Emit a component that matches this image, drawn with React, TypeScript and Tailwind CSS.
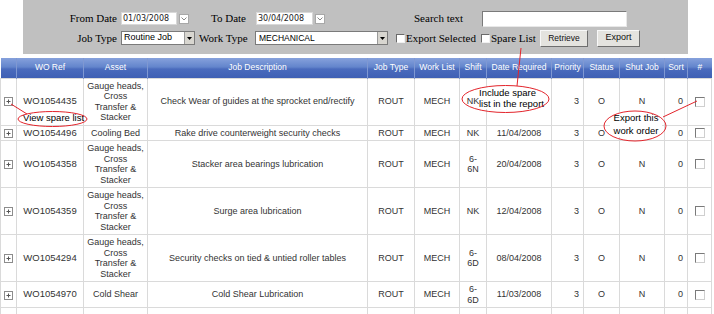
import React from "react";

type Row = {
  wo: string;
  asset: string[];
  desc: string;
  shift: string[];
  date: string;
  shut: string;
};

const rows: Row[] = [
  { wo: "WO1054435", asset: ["Gauge heads,", "Cross", "Transfer &", "Stacker"], desc: "Check Wear of guides at the sprocket end/rectify", shift: ["NK"], date: "", shut: "N" },
  { wo: "WO1054496", asset: ["Cooling Bed"], desc: "Rake drive counterweight security checks", shift: ["NK"], date: "11/04/2008", shut: "" },
  { wo: "WO1054358", asset: ["Gauge heads,", "Cross", "Transfer &", "Stacker"], desc: "Stacker area bearings lubrication", shift: ["6-", "6N"], date: "20/04/2008", shut: "N" },
  { wo: "WO1054359", asset: ["Gauge heads,", "Cross", "Transfer &", "Stacker"], desc: "Surge area lubrication", shift: ["NK"], date: "12/04/2008", shut: "N" },
  { wo: "WO1054294", asset: ["Gauge heads,", "Cross", "Transfer &", "Stacker"], desc: "Security checks on tied & untied roller tables", shift: ["6-", "6D"], date: "08/04/2008", shut: "N" },
  { wo: "WO1054970", asset: ["Cold Shear"], desc: "Cold Shear Lubrication", shift: ["6-", "6D"], date: "11/03/2008", shut: "N" },
];

const headers = ["", "WO Ref", "Asset", "Job Description", "Job Type", "Work List", "Shift", "Date Required", "Priority", "Status", "Shut Job", "Sort", "#"];
const widths = [16, 67, 64, 220, 47, 45, 27, 65, 32, 36, 45, 23, 24];

function PlusIcon() {
  return (
    <svg width="9" height="9" viewBox="0 0 9 9" className="inline-block align-middle">
      <rect x="0.5" y="0.5" width="8" height="8" fill="#fff" stroke="#8c8c8c" />
      <path d="M2.5 4.5H6.5M4.5 2.5V6.5" stroke="#555" strokeWidth="1" />
    </svg>
  );
}

function RowCheck() {
  return (
    <span className="inline-block align-middle w-[10px] h-[10px] bg-white border-t border-l border-t-[#7a7a7a] border-l-[#7a7a7a] border-b border-r border-b-[#cfcfcf] border-r-[#cfcfcf]" />
  );
}

function PanelCheck() {
  return (
    <span className="inline-block w-[9px] h-[9px] bg-white border-t border-l border-t-[#6a6a6a] border-l-[#6a6a6a] border-b border-r border-b-[#f0f0f0] border-r-[#f0f0f0]" />
  );
}

function DateBtn() {
  return (
    <span className="flex items-center justify-center w-[10px] h-[10px] bg-white border border-[#a8a8a8]">
      <svg width="6" height="4" viewBox="0 0 6 4">
        <path d="M0.5 0.5L3 3L5.5 0.5" stroke="#888" fill="none" strokeWidth="1" />
      </svg>
    </span>
  );
}

function SelectArrow() {
  return (
    <span className="flex items-center justify-center w-[10px] h-full bg-[#d8d6d0] border-l border-[#9a9a9a]">
      <svg width="5" height="3" viewBox="0 0 5 3">
        <path d="M0 0H5L2.5 3Z" fill="#000" />
      </svg>
    </span>
  );
}

const cell = "border border-[#dadada] py-[2px]";

export default function App() {
  const serif = { fontFamily: '"Liberation Serif", "Times New Roman", serif' };
  const sans = { fontFamily: '"Liberation Sans", Arial, sans-serif' };
  const verd = { fontFamily: '"DejaVu Sans", Verdana, sans-serif' };
  return (
    <div className="relative w-[714px] h-[314px] overflow-hidden bg-white" style={sans}>
      {/* filter panel */}
      <div className="ml-[23px] w-[665px] h-[54px] bg-[#c0c0c0] pt-[10px] text-[11px] text-black" style={serif}>
        <div className="flex items-center h-[17px]">
          <div className="w-[94px] text-right">From Date</div>
          <div className="ml-[4px] w-[56px] h-[13px] bg-white border border-[#d8d8d8] flex items-center pl-[1px] text-[8px] text-[#222]" style={verd}>01/03/2008</div>
          <div className="ml-[2px]"><DateBtn /></div>
          <div className="ml-[22px] w-[45px]">To Date</div>
          <div className="w-[57px] h-[13px] bg-white border border-[#d8d8d8] flex items-center pl-[1px] text-[8px] text-[#222]" style={verd}>30/04/2008</div>
          <div className="ml-[2px]"><DateBtn /></div>
          <div className="ml-[89px] w-[68px]">Search text</div>
          <div className="w-[145px] h-[16px] bg-white border-t border-l border-t-[#7a7a7a] border-l-[#7a7a7a] border-b border-r border-b-[#e8e8e8] border-r-[#e8e8e8]" />
        </div>
        <div className="flex items-center h-[18px] mt-[2px]">
          <div className="w-[94px] text-right">Job Type</div>
          <div className="ml-[4px] w-[74px] h-[14px] bg-white border border-[#7a7a7a] flex items-stretch">
            <span className="flex-1 flex items-center pl-[2px] text-[9px] text-black" style={sans}>Routine Job</span>
            <SelectArrow />
          </div>
          <div className="ml-[4px] w-[56px]">Work Type</div>
          <div className="w-[133px] h-[14px] bg-white border border-[#7a7a7a] flex items-stretch">
            <span className="flex-1 flex items-center pl-[3px] text-[8.5px] text-black" style={sans}>MECHANICAL</span>
            <SelectArrow />
          </div>
          <div className="ml-[8px] flex items-center"><PanelCheck /></div>
          <div className="ml-[1px] w-[75px]">Export Selected</div>
          <div className="flex items-center"><PanelCheck /></div>
          <div className="ml-[1px] w-[49px]">Spare List</div>
          <div className="w-[48px] h-[17px] flex items-center justify-center bg-[#e4e3df] border-t border-l border-t-[#f8f8f8] border-l-[#f8f8f8] border-b border-r border-b-[#6e6e6e] border-r-[#6e6e6e] text-[8.5px] text-[#111]" style={sans}>Retrieve</div>
          <div className="ml-[9px] w-[43px] h-[17px] flex items-center justify-center bg-[#e4e3df] border-t border-l border-t-[#f8f8f8] border-l-[#f8f8f8] border-b border-r border-b-[#6e6e6e] border-r-[#6e6e6e] text-[9px] text-[#111]" style={sans}>Export</div>
        </div>
      </div>

      {/* grid */}
      <table className="mt-[4px] w-[711px] table-fixed border-collapse text-[9px] text-[#333]">
        <colgroup>
          {widths.map((w, i) => (
            <col key={i} style={{ width: w }} />
          ))}
        </colgroup>
        <thead>
          <tr className="h-[20px] bg-[linear-gradient(to_bottom,#86a1dc_0%,#6385cc_45%,#4a6bbd_55%,#3f60b4_100%)]">
            {headers.map((h, i) => (
              <th key={i} className="font-normal text-white text-[8.5px] text-center px-0 border-l border-[#7f98d2] first:border-l-0 whitespace-nowrap">
                {h}
              </th>
            ))}
          </tr>
        </thead>
        <tbody>
          {rows.map((r, idx) => (
            <tr key={idx} className="leading-[10.5px]">
              <td className={`${cell} text-center`}><PlusIcon /></td>
              <td className={`${cell} text-center text-[9.5px]`}>{r.wo}</td>
              <td className={`${cell} text-center`}>
                {r.asset.map((a, j) => (
                  <div key={j}>{a}</div>
                ))}
              </td>
              <td className={`${cell} text-center`}>{r.desc}</td>
              <td className={`${cell} text-center`}>ROUT</td>
              <td className={`${cell} text-center`}>MECH</td>
              <td className={`${cell} text-center`}>
                {r.shift.map((s, j) => (
                  <div key={j}>{s}</div>
                ))}
              </td>
              <td className={`${cell} text-center`}>{r.date}</td>
              <td className={`${cell} text-right pr-[4px]`}>3</td>
              <td className={`${cell} text-center`}>O</td>
              <td className={`${cell} text-center`}>{r.shut}</td>
              <td className={`${cell} text-right pr-[4px]`}>0</td>
              <td className={`${cell} text-center`}><RowCheck /></td>
            </tr>
          ))}
          <tr className="h-[26px]">
            {widths.map((_, i) => (
              <td key={i} className="border border-[#dadada]" />
            ))}
          </tr>
        </tbody>
      </table>

      {/* annotation labels */}
      <div className="absolute left-[23px] top-[112px] text-[9.5px] leading-[12px] text-black whitespace-nowrap">View spare list</div>
      <div className="absolute left-[479px] top-[87px] w-[68px] h-[22px] bg-white text-[9.5px] leading-[11px] text-black whitespace-nowrap">
        <div>Include spare</div>
        <div>list in the report</div>
      </div>
      <div className="absolute left-[610px] top-[112px] w-[52px] h-[25px] bg-white text-center text-[9.5px] leading-[12.5px] text-black whitespace-nowrap">
        <div>Export this</div>
        <div>work order</div>
      </div>

      {/* annotation drawing */}
      <svg className="absolute left-0 top-0 pointer-events-none" width="714" height="314" viewBox="0 0 714 314">
        <g stroke="#e3242b" strokeWidth="1" fill="none">
          <ellipse cx="52.5" cy="119" rx="34.5" ry="7.5" />
          <path d="M11 104L27 114" />
          <ellipse cx="505.5" cy="99" rx="43.5" ry="13.5" />
          <path d="M521 48L517 86" />
          <ellipse cx="635" cy="126" rx="31" ry="15" />
          <path d="M663 117L697 101" />
        </g>
      </svg>
    </div>
  );
}
